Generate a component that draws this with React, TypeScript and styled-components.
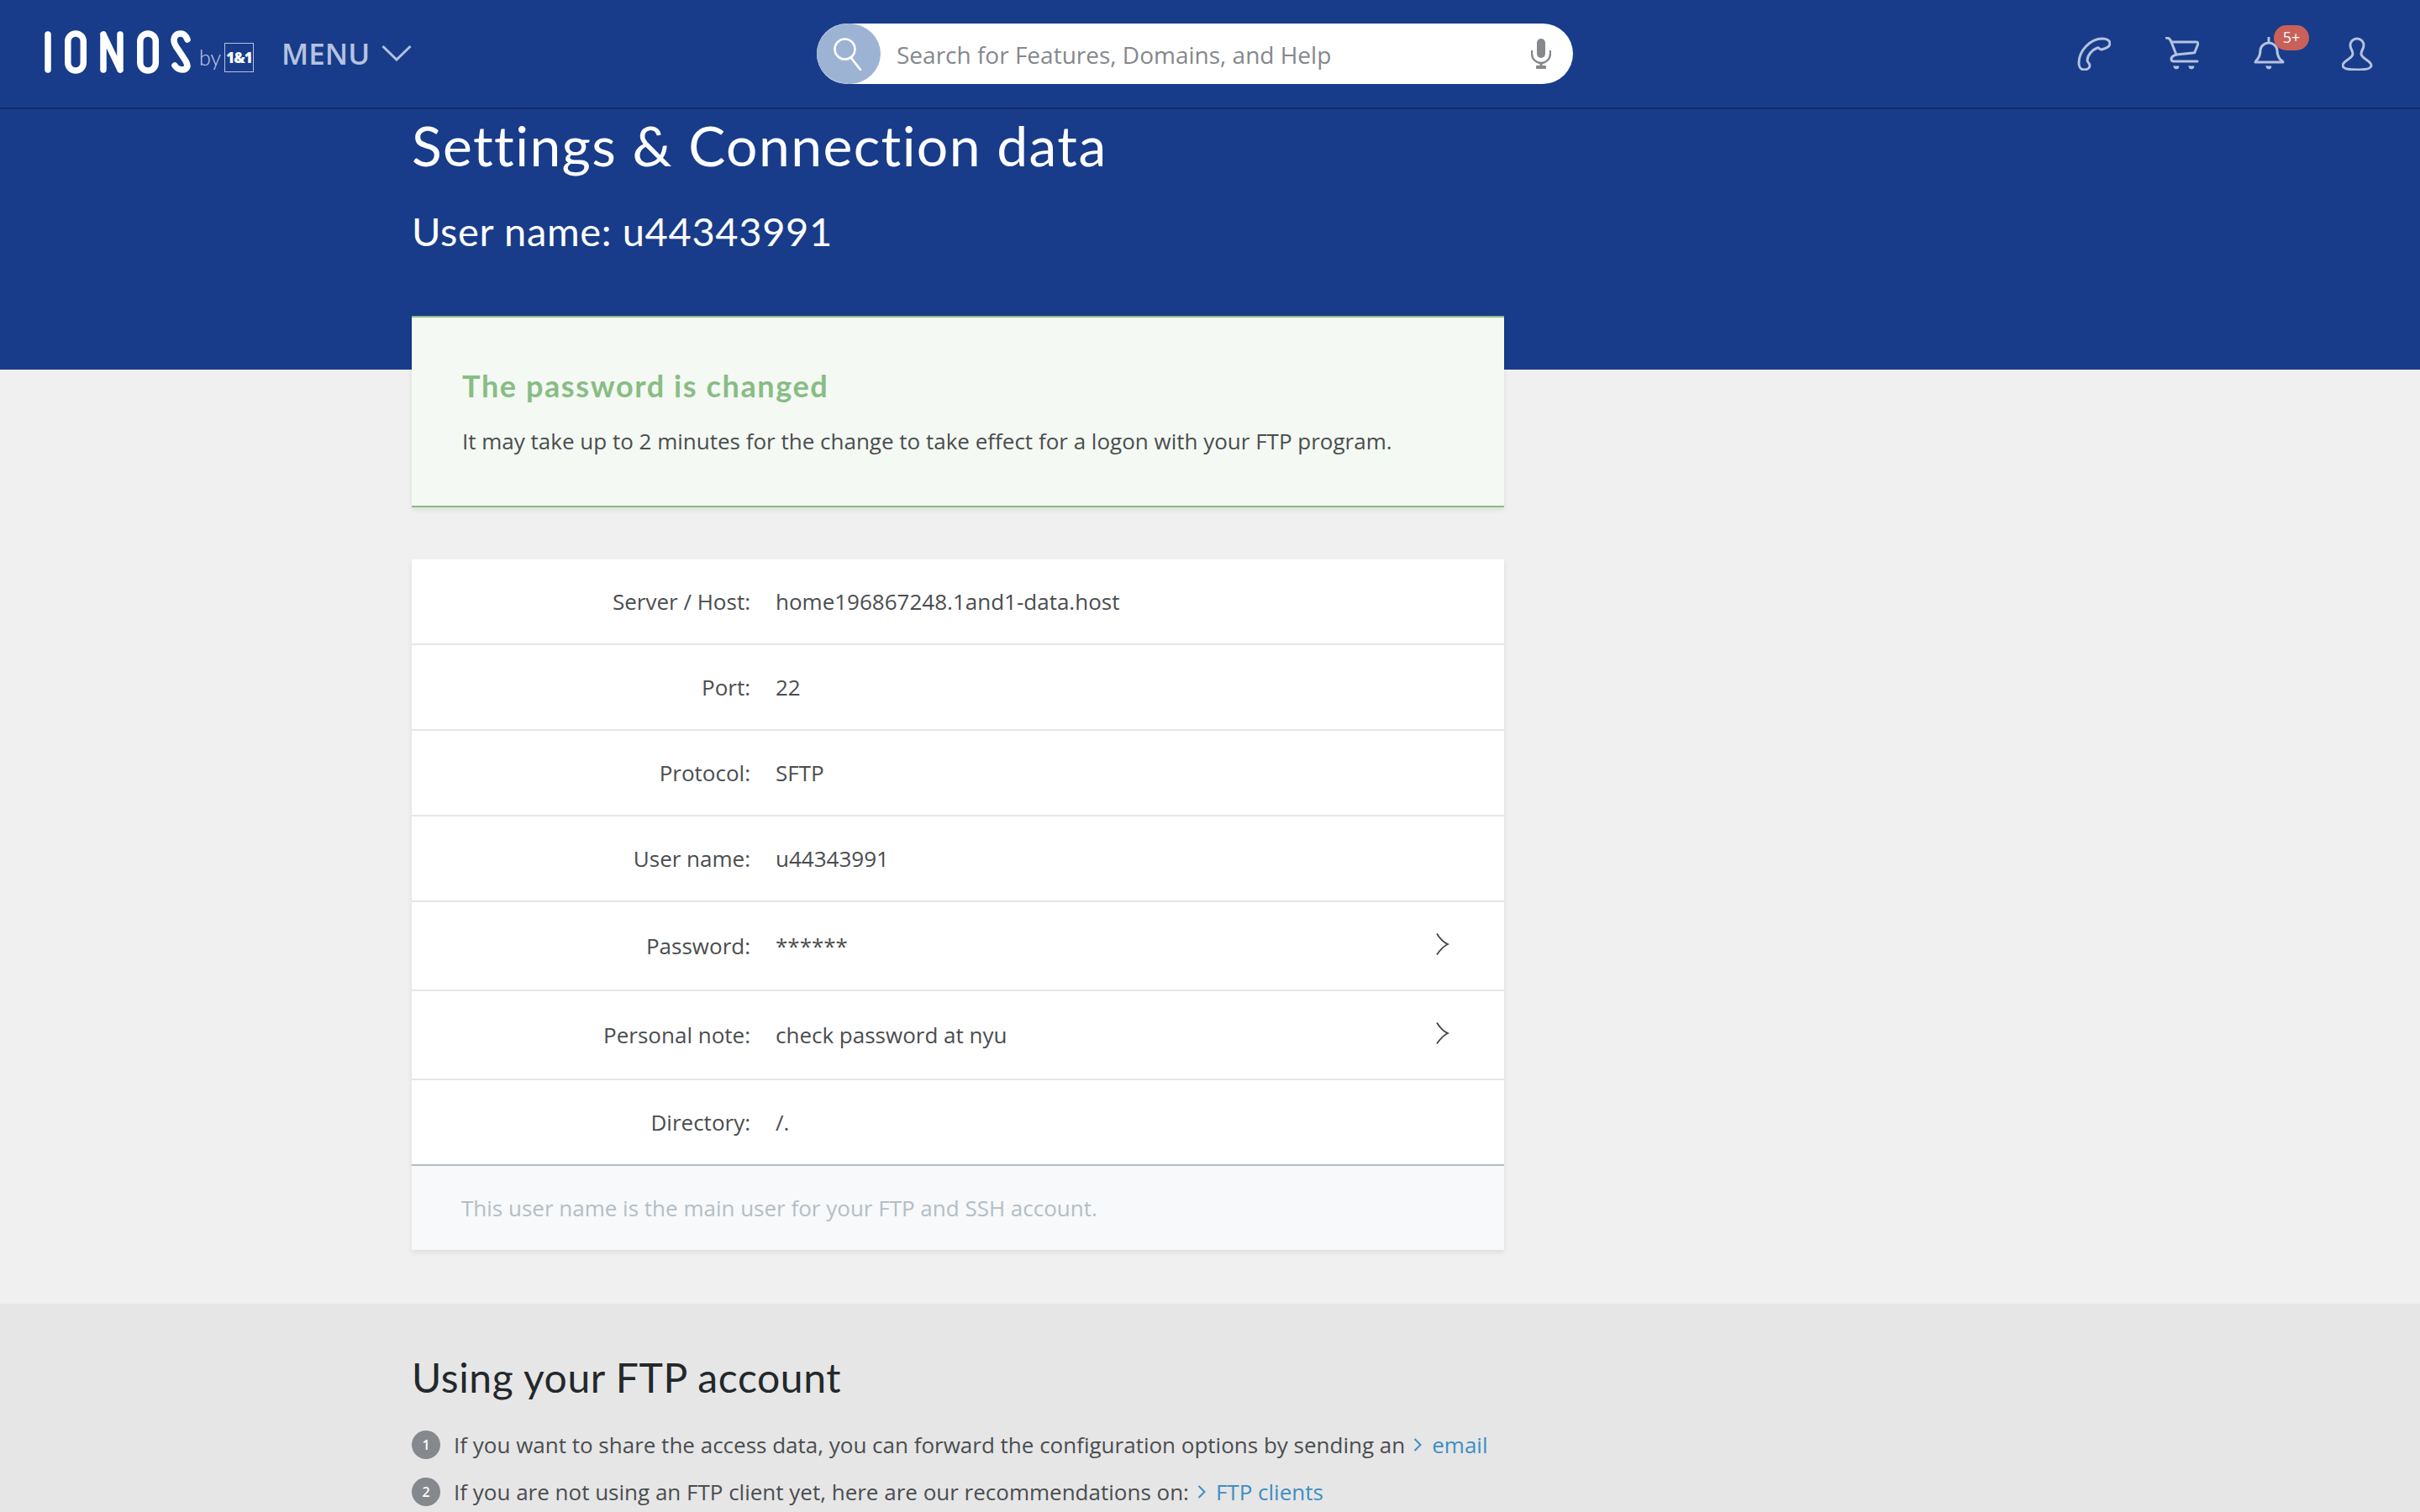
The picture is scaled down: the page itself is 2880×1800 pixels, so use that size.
import React from "react";
import styled, { createGlobalStyle } from "styled-components";

const Global = createGlobalStyle`
  html, body { margin: 0; padding: 0; background: #f0f0f0; }
  body { font-family: "Open Sans", "Liberation Sans", sans-serif; color: #4a4d50; }
  * { box-sizing: border-box; }
`;

const Page = styled.div`
  width: 2880px;
  height: 1800px;
  overflow: hidden;
  display: flex;
  flex-direction: column;
`;

const TopBar = styled.header`
  height: 130px;
  flex: none;
  background: #183c8a;
  border-bottom: 2px solid #0f2a66;
  display: flex;
  align-items: center;
  position: relative;
  padding-left: 53px;
`;

const Logo = styled.svg`
  width: 250px;
  height: 52px;
  flex: none;
  margin-top: -4px;
`;

const MenuButton = styled.div`
  margin-left: 32px;
  display: flex;
  align-items: center;
  gap: 14px;
  font-size: 35px;
  font-weight: 600;
  color: #b5c2e0;
  margin-top: -2px;
`;

const SearchBox = styled.div`
  position: absolute;
  left: 972px;
  top: 28px;
  width: 900px;
  height: 72px;
  border-radius: 36px;
  background: #fff;
  display: flex;
  align-items: center;
`;

const SearchCircle = styled.div`
  width: 76px;
  height: 72px;
  border-radius: 50%;
  background: #9db3d3;
  display: flex;
  align-items: center;
  justify-content: center;
  flex: none;
`;

const SearchText = styled.span`
  margin-left: 19px;
  margin-top: 2px;
  font-size: 28px;
  color: #85888c;
  flex: 1;
`;

const MicIcon = styled.svg`
  width: 24px;
  height: 36px;
  margin-right: 26px;
  flex: none;
`;

const IconRow = styled.div`
  position: absolute;
  left: 2472px;
  top: 44px;
  display: flex;
  gap: 65px;
`;

const IconSlot = styled.div`
  position: relative;
  width: 40px;
  height: 40px;
`;

const Badge = styled.span`
  position: absolute;
  left: 24px;
  top: -14px;
  width: 42px;
  height: 30px;
  border-radius: 15px;
  background: #c9605a;
  color: #fff;
  font-size: 18px;
  line-height: 29px;
  text-align: center;
`;

const Hero = styled.section`
  height: 310px;
  flex: none;
  background: #183c8a;
  padding-left: 490px;
  color: #fff;
`;

const PageTitle = styled.h1`
  margin: 0;
  padding-top: 8px;
  font-family: "Lato", "Open Sans", sans-serif;
  font-size: 66px;
  line-height: 70px;
  font-weight: 400;
  letter-spacing: 1.4px;
`;

const SubTitle = styled.h2`
  margin: 40px 0 0;
  font-family: "Lato", "Open Sans", sans-serif;
  font-size: 47px;
  line-height: 54px;
  font-weight: 400;
  letter-spacing: 0.65px;
`;

const Column = styled.div`
  width: 1300px;
  margin-left: 490px;
  flex: none;
`;

const Notice = styled.div`
  margin-top: -64px;
  height: 228px;
  background: #f4f9f3;
  border-top: 2px solid #88bd84;
  border-bottom: 2px solid #88bd84;
  padding: 58px 60px 0;
  box-shadow: 0 3px 6px rgba(0, 0, 0, 0.08);
`;

const NoticeTitle = styled.div`
  font-size: 36px;
  line-height: 46px;
  font-weight: 700;
  color: #88bd84;
  font-family: "Lato", "Open Sans", sans-serif;
  letter-spacing: 1.6px;
`;

const NoticeText = styled.p`
  margin: 23px 0 0;
  font-size: 26px;
  line-height: 40px;
`;

const DataCard = styled.div`
  margin-top: 62px;
  background: #fff;
  box-shadow: 0 3px 6px rgba(0, 0, 0, 0.08);
`;

const Row = styled.div<{ $tall?: boolean; $last?: boolean }>`
  height: ${(p) => (p.$tall ? "106px" : "102px")};
  display: flex;
  align-items: center;
  border-bottom: 2px solid ${(p) => (p.$last ? "#b0bcc1" : "#e6e6e6")};
  font-size: 26px;
  position: relative;
`;

const Label = styled.div`
  width: 403px;
  text-align: right;
  flex: none;
`;

const Value = styled.div`
  margin-left: 30px;
  flex: 1;
`;

const Chevron = styled.svg`
  width: 18px;
  height: 28px;
  margin-right: 64px;
  margin-top: -4px;
  flex: none;
`;

const CardFoot = styled.div`
  height: 100px;
  background: #f7f9fb;
  padding: 0 59px;
  display: flex;
  align-items: center;
  font-size: 26px;
  color: #b4bec3;
`;

const Help = styled.section`
  margin-top: 64px;
  flex: 1;
  background: #e6e6e6;
  padding: 58px 0 0 490px;
`;

const HelpTitle = styled.h3`
  margin: 0 0 33px;
  font-family: "Lato", "Open Sans", sans-serif;
  font-size: 48px;
  line-height: 60px;
  font-weight: 400;
  letter-spacing: 0.6px;
  color: #23282c;
`;

const Step = styled.div`
  display: flex;
  align-items: center;
  height: 34px;
  margin-bottom: 22px;
  font-size: 26px;
  white-space: nowrap;
`;

const StepNum = styled.span`
  width: 34px;
  height: 34px;
  border-radius: 50%;
  background: #85888c;
  color: #fff;
  font-size: 16px;
  font-weight: 600;
  display: flex;
  align-items: center;
  justify-content: center;
  margin-right: 16px;
  flex: none;
`;

const HelpLink = styled.span`
  color: #3d8fc2;
  margin-left: 10px;
  display: inline-flex;
  align-items: center;
  gap: 12px;
`;

const LinkArrow = styled.svg`
  width: 10px;
  height: 18px;
`;

const ArrowRight = () => (
  <Chevron viewBox="0 0 18 28" fill="none" stroke="#444" strokeWidth="1.8">
    <path d="M2 1.5c3 5 7 10 13 12.5C9 17 5 22 2 26.5" />
  </Chevron>
);

const SmallArrow = () => (
  <LinkArrow viewBox="0 0 10 18" fill="none" stroke="#3d8fc2" strokeWidth="2">
    <path d="M1.5 2l7 7-7 7" />
  </LinkArrow>
);

const iconProps = { width: 40, height: 40, viewBox: "0 0 40 40", fill: "none", stroke: "#b5c2e0", strokeWidth: 3, strokeLinejoin: "round" as const, strokeLinecap: "round" as const };

export default function App() {
  return (
    <Page>
      <Global />
      <TopBar>
        <Logo viewBox="0 0 250 52">
          <g fill="none" stroke="#fff" strokeWidth="7.5" strokeLinecap="round">
            <path d="M4 5v42" />
            <rect x="27.8" y="4" width="18.5" height="44" rx="9.2" />
            <path d="M70 5v42M90 5v42M70 5l20 42" />
            <rect x="113.8" y="4" width="18.5" height="44" rx="9.2" />
            <path d="M170 11c-2-5-4-7-8-7-5 0-8 3-8 8 0 4 2 7 5 11l8 12c2 3 3 5 3 8-1 3-3 4-6 4-4 0-7-2-9-5" />
          </g>
          <text x="184" y="42" fontFamily="Lato, sans-serif" fontSize="25" fontWeight="300" fill="#c5d0e8">by</text>
          <rect x="214.5" y="15.5" width="34" height="34" fill="none" stroke="#b5c2e0" strokeWidth="1" />
          <text x="231.5" y="39" textAnchor="middle" fontFamily="Open Sans, sans-serif" fontSize="17" fontWeight="800" letterSpacing="-1" fill="#fff">1&amp;1</text>
        </Logo>
        <MenuButton>
          MENU
          <svg width="36" height="20" viewBox="0 0 36 20" fill="none" stroke="#b5c2e0" strokeWidth="3">
            <path d="M1.5 2L18 18 34.5 2" />
          </svg>
        </MenuButton>
        <SearchBox>
          <SearchCircle>
            <svg width="38" height="40" viewBox="0 0 38 40" fill="none" stroke="#fff" strokeWidth="2.6" strokeLinecap="round">
              <circle cx="14.5" cy="14.5" r="12" />
              <path d="M22 25l11 14" />
            </svg>
          </SearchCircle>
          <SearchText>Search for Features, Domains, and Help</SearchText>
          <MicIcon viewBox="0 0 24 36" fill="#85888c">
            <rect x="7" y="0" width="10" height="23" rx="5" />
            <path d="M1 14v4c0 6 5 11 11 11s11-5 11-11v-4" fill="none" stroke="#85888c" strokeWidth="2.4" />
            <rect x="10.5" y="28" width="3" height="5" />
            <rect x="6" y="32" width="12" height="4" rx="1" />
          </MicIcon>
        </SearchBox>
        <IconRow>
          <IconSlot>
            <svg {...iconProps}>
              <path d="M2 31C2 17 15 2 30 2c5 0 9 2 9 6 0 4-6 6-10 7-3 0-3-3-5-2-6 2-12 9-12 15 0 2 3 3 3 6 0 3-3 5-7 5-4 0-6-4-6-8z" />
            </svg>
          </IconSlot>
          <IconSlot>
            <svg {...iconProps}>
              <path d="M1 1c3 0 5 2 6 5l6 15c-3 1-6 3-6 5s1 3 3 3h28" />
              <path d="M7 6h30c1 0 2 1 2 2l-4 10c0 1-1 1-2 1l-20 2" />
              <path d="M10 35h6a3 3 0 0 1-6 0zM28 35h6a3 3 0 0 1-6 0z" fill="#b5c2e0" strokeWidth="1" />
            </svg>
          </IconSlot>
          <IconSlot>
            <svg {...iconProps}>
              <path d="M2 30c0-1 1-2 3-4 2-3 3-6 3-10 0-5 5-9 10-9s10 4 10 9c0 4 1 7 3 10 2 2 4 3 4 4z" />
              <path d="M18 1v5" />
              <path d="M15 35h6a3 3 0 0 1-6 0z" fill="#b5c2e0" strokeWidth="1" />
            </svg>
            <Badge>5+</Badge>
          </IconSlot>
          <IconSlot>
            <svg {...iconProps}>
              <path d="M18 2c-5 0-8 4-8 8 0 4 3 6 3 10 0 6-12 8-12 14 0 4 9 5 17 5s17-1 17-5c0-6-12-8-12-14 0-4 3-6 3-10 0-4-3-8-8-8z" />
            </svg>
          </IconSlot>
        </IconRow>
      </TopBar>
      <Hero>
        <PageTitle>Settings &amp; Connection data</PageTitle>
        <SubTitle>User name: u44343991</SubTitle>
      </Hero>
      <Column>
        <Notice>
          <NoticeTitle>The password is changed</NoticeTitle>
          <NoticeText>It may take up to 2 minutes for the change to take effect for a logon with your FTP program.</NoticeText>
        </Notice>
        <DataCard>
          <Row><Label>Server / Host:</Label><Value>home196867248.1and1-data.host</Value></Row>
          <Row><Label>Port:</Label><Value>22</Value></Row>
          <Row><Label>Protocol:</Label><Value>SFTP</Value></Row>
          <Row><Label>User name:</Label><Value>u44343991</Value></Row>
          <Row $tall><Label>Password:</Label><Value>******</Value><ArrowRight /></Row>
          <Row $tall><Label>Personal note:</Label><Value>check password at nyu</Value><ArrowRight /></Row>
          <Row $last><Label>Directory:</Label><Value>/.</Value></Row>
          <CardFoot>This user name is the main user for your FTP and SSH account.</CardFoot>
        </DataCard>
      </Column>
      <Help>
        <HelpTitle>Using your FTP account</HelpTitle>
        <Step>
          <StepNum>1</StepNum>
          If you want to share the access data, you can forward the configuration options by sending an
          <HelpLink><SmallArrow />email</HelpLink>
        </Step>
        <Step>
          <StepNum>2</StepNum>
          If you are not using an FTP client yet, here are our recommendations on:
          <HelpLink><SmallArrow />FTP clients</HelpLink>
        </Step>
      </Help>
    </Page>
  );
}
